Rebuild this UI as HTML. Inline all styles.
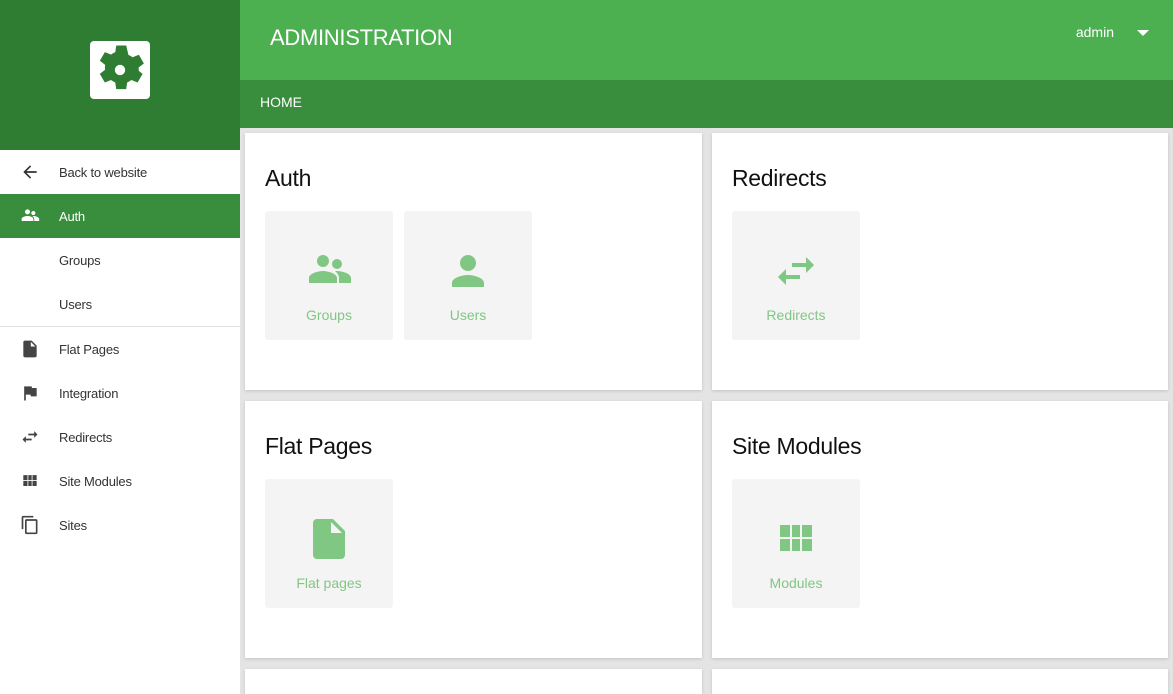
<!DOCTYPE html>
<html style="overflow:hidden;height:694px"><head><style>
*{margin:0;padding:0;box-sizing:border-box}
body{width:1173px;height:694px;overflow:hidden;font-family:"Liberation Sans",sans-serif;background:#e4e4e4;position:relative}
.side{position:absolute;left:0;top:0;width:240px;height:694px;background:#fff}
.logo{height:150px;background:#2e7d32;position:relative}
.logo .box{position:absolute;left:90px;top:41px;width:60px;height:58px;background:#fff;border-radius:4px}
.item{height:44px;display:flex;align-items:center;font-size:13px;color:#333;letter-spacing:-.2px}
.item svg{width:20px;height:20px;margin-left:20px;margin-right:19px}
.item.act{background:#388e3c;color:#fff}
.sub{padding-left:59px}
.top{position:absolute;left:240px;top:0;right:0;height:80px;background:#4caf50;color:#fff}
.top h1{position:absolute;left:30px;top:25px;font-weight:normal;font-size:22px;letter-spacing:-.3px}
.top .u{position:absolute;right:59px;top:24px;font-size:14px}
.top .c{position:absolute;right:24px;top:30px;border:6px solid transparent;border-top:6px solid #fff}
.bc{position:absolute;left:240px;top:80px;right:0;height:48px;background:#388e3c;color:#fff;font-size:14px;padding:14px 20px}
.card{position:absolute;background:#fff;box-shadow:0 1px 3px rgba(0,0,0,.15)}
.card h2{position:absolute;left:20px;top:32px;font-weight:normal;font-size:23px;color:#111;letter-spacing:-.3px}
.tile{position:absolute;top:78px;width:128px;height:129px;background:#f4f4f4;border-radius:3px;color:#81c784;font-size:14px;text-align:center}
.tile svg{position:absolute;left:40px;top:36px;width:48px;height:48px}
.tile span{position:absolute;left:0;right:0;top:96px}
</style></head><body>
<div class="side">
<div class="logo"><div class="box"><svg viewBox="2.4 2.4 19.2 19.2" width="50" height="50" style="position:absolute;left:5px;top:4px"><path fill="#2e7d32" d="M19.14 12.94c.04-.3.06-.61.06-.94s-.02-.64-.07-.94l2.03-1.58-1.92-3.32-2.39.96c-.5-.38-1.03-.7-1.62-.94L14.4 2.6h-3.84l-.36 2.54c-.59.24-1.13.57-1.62.94l-2.39-.96-1.92 3.32 2.03 1.58c-.05.3-.09.63-.09.94s.02.64.07.94l-2.03 1.58 1.92 3.32 2.39-.96c.5.38 1.030.7 1.62.94l.36 2.54h3.840l.36-2.54c.59-.24 1.13-.56 1.62-.94l2.39.96 1.92-3.32-2.03-1.58zM12 14a2 2 0 110-4 2 2 0 010 4z"/></svg></div></div>
<div class="item"><svg viewBox="0 0 24 24"><path fill="#333" d="M20 11H7.83l5.59-5.59L12 4l-8 8 8 8 1.41-1.41L7.83 13H20v-2z"/></svg>Back to website</div>
<div class="item act"><svg viewBox="0 0 24 24"><path fill="#fff" d="M16 11a2.5 2.5 0 100-5 2.5 2.5 0 000 5zm-7-1a3 3 0 100-6 3 3 0 000 6zm0 2c-2.3 0-7 1.2-7 3.5V18h14v-2.5C16 13.2 11.3 12 9 12zm7 0c-.3 0-.6 0-1 .1 1.2.8 2 2 2 3.4V18h6v-2.5c0-2.3-4.7-3.5-7-3.5z"/></svg>Auth</div>
<div class="item sub">Groups</div>
<div class="item sub">Users</div>
<div style="border-top:1px solid #e0e0e0"></div>
<div class="item"><svg viewBox="0 0 24 24"><path fill="#444" d="M6 2h8l6 6v12a2 2 0 01-2 2H6a2 2 0 01-2-2V4a2 2 0 012-2zm7 1.5V9h5.5z"/></svg>Flat Pages</div>
<div class="item"><svg viewBox="0 0 24 24"><path fill="#444" d="M14.4 6L14 4H5v17h2v-7h5.6l.4 2h7V6z"/></svg>Integration</div>
<div class="item"><svg viewBox="0 0 24 24"><path fill="#444" d="M6.99 11L3 15l3.99 4v-3H14v-2H6.99v-3zM21 9l-3.99-4v3H10v2h7.01v3L21 9z"/></svg>Redirects</div>
<div class="item"><svg viewBox="0 0 24 24"><path fill="#444" d="M4 5h5v6H4zm6 0h4v6h-4zm5 0h5v6h-5zM4 12h5v6H4zm6 0h4v6h-4zm5 0h5v6h-5z"/></svg>Site Modules</div>
<div class="item"><svg viewBox="0 0 24 24"><path fill="#444" d="M16 1H4a2 2 0 00-2 2v14h2V3h12V1zm3 4H8a2 2 0 00-2 2v14a2 2 0 002 2h11a2 2 0 002-2V7a2 2 0 00-2-2zm0 16H8V7h11v14z"/></svg>Sites</div>
</div>
<div class="top"><h1>ADMINISTRATION</h1><span class="u">admin</span><span class="c"></span></div>
<div class="bc">HOME</div>
<div class="card" style="left:245px;top:133px;width:457px;height:257px"><h2>Auth</h2>
<div class="tile" style="left:20px"><svg viewBox="0 0 24 24"><path fill="#81c784" d="M16 11a2.5 2.5 0 100-5 2.5 2.5 0 000 5zm-7-1a3 3 0 100-6 3 3 0 000 6zm0 2c-2.3 0-7 1.2-7 3.5V18h14v-2.5C16 13.2 11.3 12 9 12zm7 0c-.3 0-.6 0-1 .1 1.2.8 2 2 2 3.4V18h6v-2.5c0-2.3-4.7-3.5-7-3.5z"/></svg><span>Groups</span></div>
<div class="tile" style="left:159px"><svg viewBox="0 0 24 24"><path fill="#81c784" d="M12 12a4 4 0 100-8 4 4 0 000 8zm0 2c-2.7 0-8 1.3-8 4v2h16v-2c0-2.7-5.3-4-8-4z"/></svg><span>Users</span></div></div>
<div class="card" style="left:712px;top:133px;width:456px;height:257px"><h2>Redirects</h2>
<div class="tile" style="left:20px"><svg viewBox="0 0 24 24"><path fill="#81c784" d="M6.99 11L3 15l3.99 4v-3H14v-2H6.99v-3zM21 9l-3.99-4v3H10v2h7.01v3L21 9z"/></svg><span>Redirects</span></div></div>
<div class="card" style="left:245px;top:401px;width:457px;height:257px"><h2>Flat Pages</h2>
<div class="tile" style="left:20px"><svg viewBox="0 0 24 24"><path fill="#81c784" d="M6 2h8l6 6v12a2 2 0 01-2 2H6a2 2 0 01-2-2V4a2 2 0 012-2zm7 1.5V9h5.5z"/></svg><span>Flat pages</span></div></div>
<div class="card" style="left:712px;top:401px;width:456px;height:257px"><h2>Site Modules</h2>
<div class="tile" style="left:20px"><svg viewBox="0 0 24 24"><path fill="#81c784" d="M4 5h5v6H4zm6 0h4v6h-4zm5 0h5v6h-5zM4 12h5v6H4zm6 0h4v6h-4zm5 0h5v6h-5z"/></svg><span>Modules</span></div></div>
<div class="card" style="left:245px;top:669px;width:457px;height:25px"></div>
<div class="card" style="left:712px;top:669px;width:456px;height:25px"></div>
</body></html>
